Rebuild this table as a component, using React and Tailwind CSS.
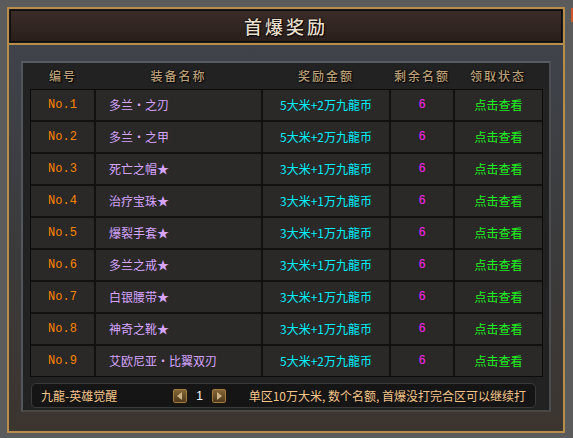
import React from 'react';

const rows = [
  { no: 'No.1', name: '多兰·之刃', reward: '5大米+2万九龍币' },
  { no: 'No.2', name: '多兰·之甲', reward: '5大米+2万九龍币' },
  { no: 'No.3', name: '死亡之帽★', reward: '3大米+1万九龍币' },
  { no: 'No.4', name: '治疗宝珠★', reward: '3大米+1万九龍币' },
  { no: 'No.5', name: '爆裂手套★', reward: '3大米+1万九龍币' },
  { no: 'No.6', name: '多兰之戒★', reward: '3大米+1万九龍币' },
  { no: 'No.7', name: '白银腰带★', reward: '3大米+1万九龍币' },
  { no: 'No.8', name: '神奇之靴★', reward: '3大米+1万九龍币' },
  { no: 'No.9', name: '艾欧尼亚·比翼双刃', reward: '5大米+2万九龍币' },
];

const cjk = { fontFamily: '"Noto Sans CJK SC", "Noto Sans", sans-serif' };
const headShadow = { textShadow: '1px 1px 1px #000, 0 0 2px #000' };
const mono = { fontFamily: '"Liberation Mono", monospace' };

const PageButton = ({ dir }) => (
  <button className="w-4 h-4 rounded-[3px] border border-[#1c150c] bg-gradient-to-b from-[#8a6a3a] to-[#4a3618] shadow-[inset_0_0_0_1px_#a07c44] flex items-center justify-center">
    <svg width="6" height="8" viewBox="0 0 6 8">
      {dir === 'left' ? (
        <polygon points="5,0 5,8 0,4" fill="#cdb488" />
      ) : (
        <polygon points="1,0 1,8 6,4" fill="#cdb488" />
      )}
    </svg>
  </button>
);

export default function App() {
  return (
    <div className="relative w-[573px] h-[438px] bg-[#5b5b5b] overflow-hidden pt-[7px] pl-[7px]" style={cjk}>
      {/* cut-off element at right edge */}
      <div className="absolute right-0 top-[8px] w-[2px] h-[14px] bg-[#d0562c]" />

      <div className="w-[558px] h-[426px] border-2 border-[#b78d4b] flex flex-col bg-[#1b1b1b]">
        {/* title */}
        <div className="h-[32px] m-[1px] border border-[#0f0c0b] bg-gradient-to-b from-[#3a2c28] to-[#2a1f1c] flex items-center justify-center">
          <span className="text-[18px] tracking-[3px] text-[#e8decb] font-medium" style={headShadow}>
            首爆奖励
          </span>
        </div>
        <div className="h-[2px] bg-[#b78d4b]" />

        {/* panel */}
        <div className="flex-1 bg-gradient-to-b from-[#3f434a] via-[#3b3b3c] to-[#3c3530] pt-[16px] px-[12px]">
          <div className="h-[351px] border-[2px] border-t-[#575c63] border-l-[#51565c] border-r-[#4a4c50] border-b-[#4b4640] bg-[#222222] flex flex-col">
            {/* header */}
            <div className="h-[26px] flex items-center pl-[8px] text-[12px] font-medium tracking-[2px] text-[#bba077]" style={headShadow}>
              <div className="w-[64px] text-center">编号</div>
              <div className="w-[167px] text-center">装备名称</div>
              <div className="w-[128px] text-center">奖励金额</div>
              <div className="w-[64px] text-center">剩余名额</div>
              <div className="w-[88px] text-center">领取状态</div>
            </div>

            {/* table */}
            <div className="ml-[7px] w-[513px] bg-[#111111] border border-[#0c0c0c] flex flex-col gap-[2px]">
              {rows.map((r) => (
                <div key={r.no} className="h-[30px] flex gap-[2px] text-[12px]">
                  <div className="w-[63px] bg-[#2a2927] flex items-center justify-center text-[#ff8400] text-[12px]" style={mono}>
                    {r.no}
                  </div>
                  <div className="w-[165px] bg-[#2a2927] flex items-center pl-[13px] text-[#d6a4ff]">{r.name}</div>
                  <div className="w-[126px] bg-[#2a2927] flex items-center justify-center text-[#00eeff]">{r.reward}</div>
                  <div className="w-[62px] bg-[#2a2927] flex items-center justify-center text-[#ff22ff]" style={mono}>
                    6
                  </div>
                  <div className="flex-1 bg-[#2a2927] flex items-center justify-center text-[#22f022]">点击查看</div>
                </div>
              ))}
            </div>

            {/* footer */}
            <div className="mt-[6px] ml-[8px] w-[505px] h-[25px] rounded-[5px] border border-[#3a3a3a] bg-[#151515] flex items-center px-[9px] text-[12px] text-[#f3c489]">
              <div className="w-[131px]">九龍-英雄觉醒</div>
              <PageButton dir="left" />
              <div className="w-[23px] text-center text-white" style={{ fontFamily: '"Liberation Sans", sans-serif' }}>1</div>
              <PageButton dir="right" />
              <div className="ml-auto">单区10万大米, 数个名额, 首爆没打完合区可以继续打</div>
            </div>
          </div>
        </div>
      </div>
    </div>
  );
}
